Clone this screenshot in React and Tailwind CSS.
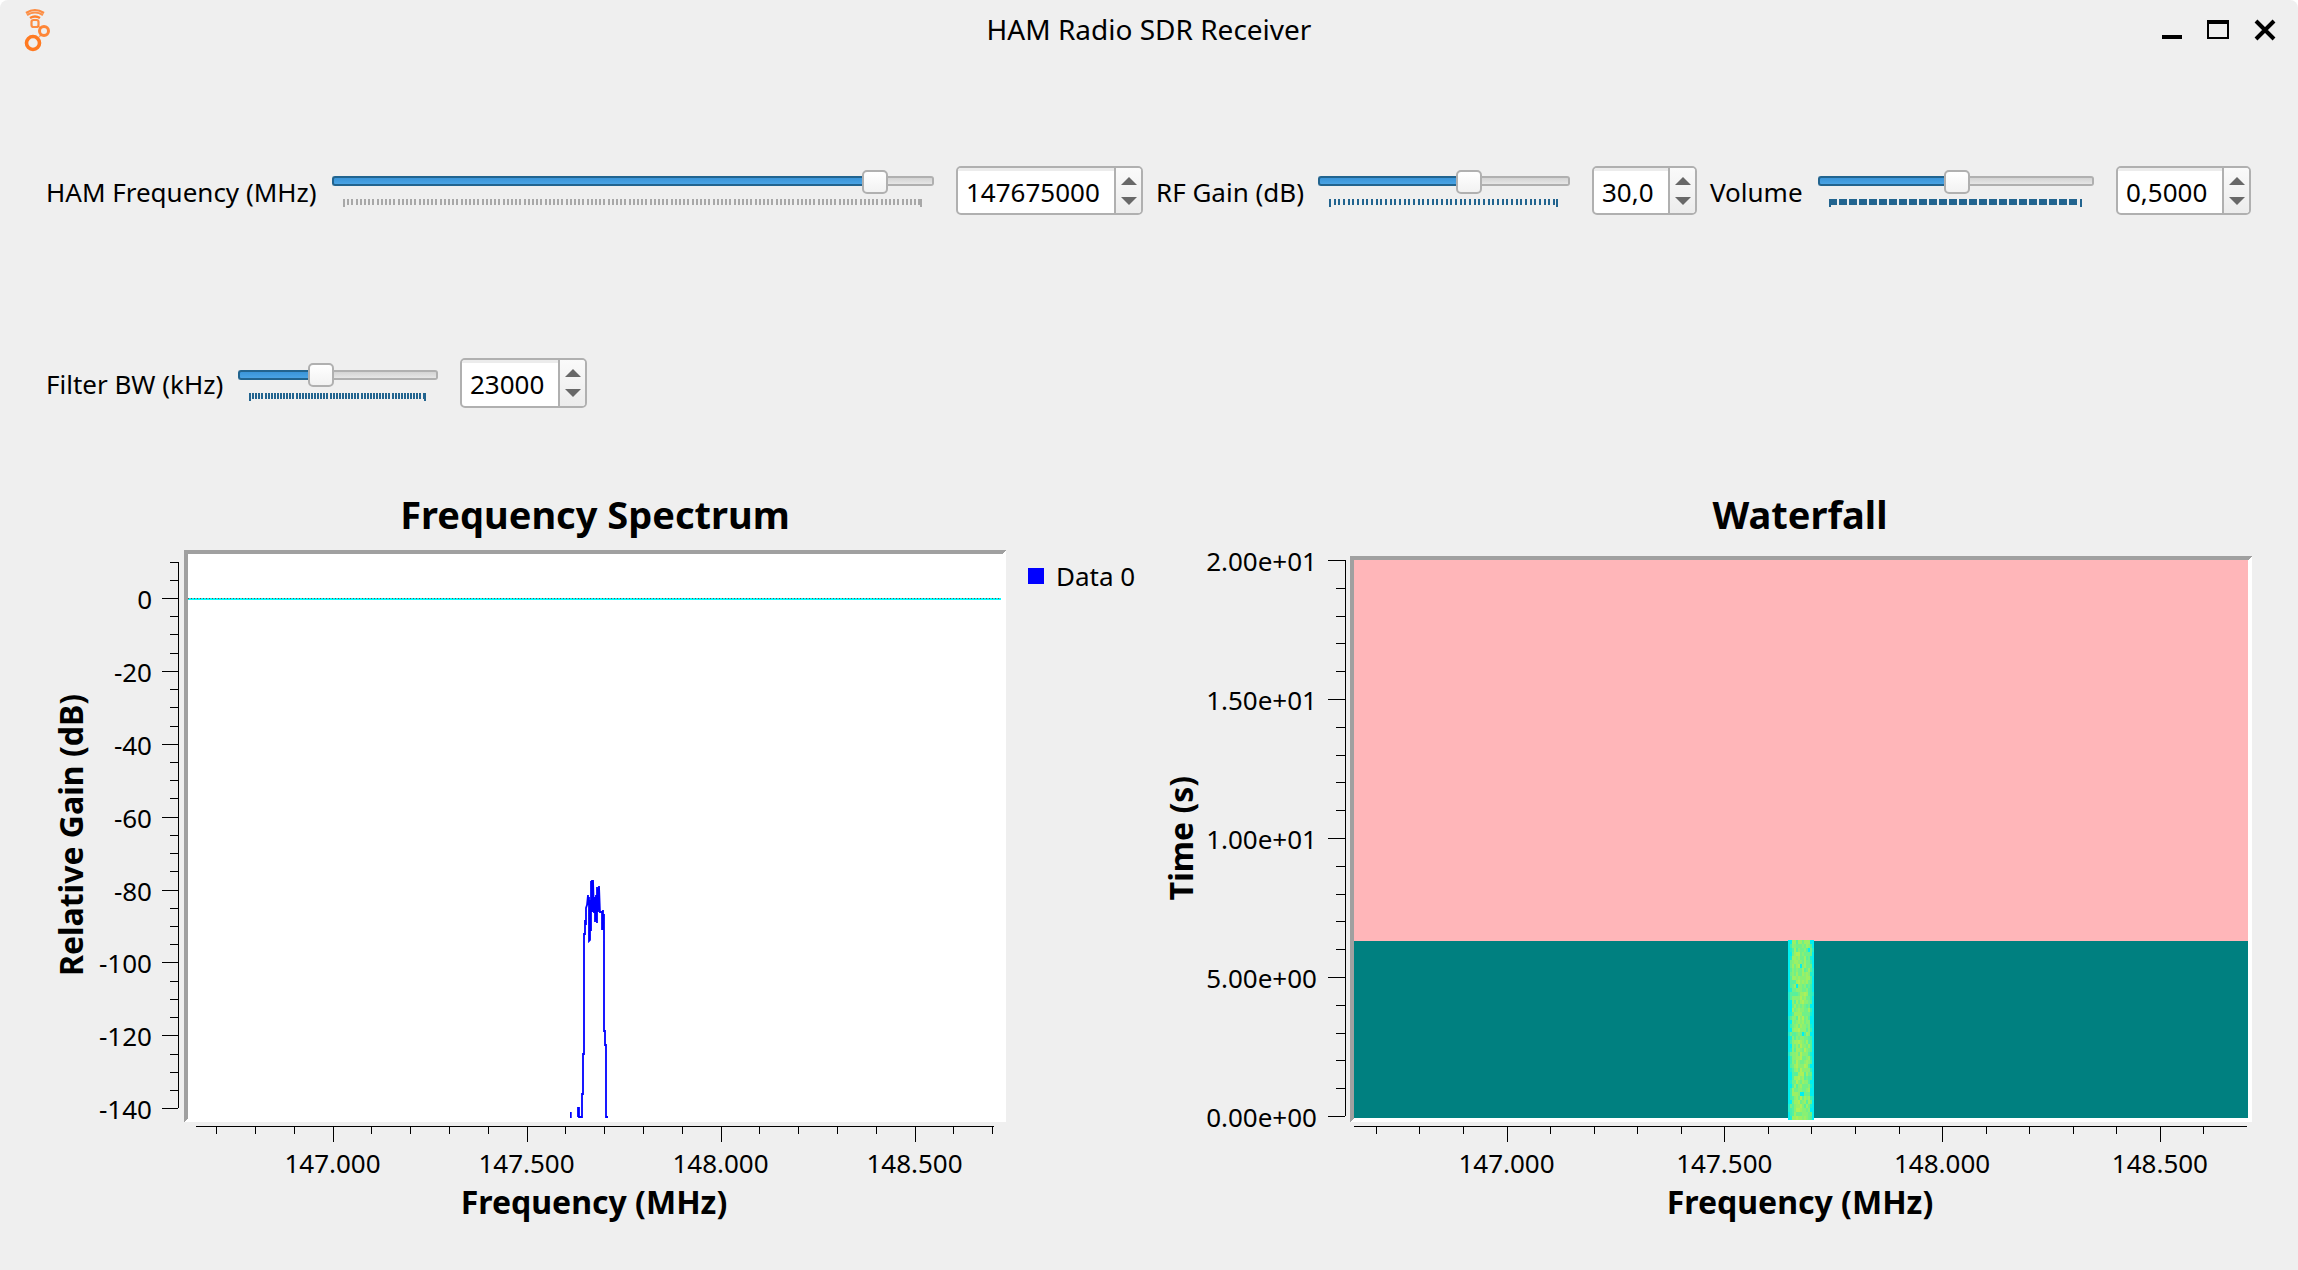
const FONT = "font-['Noto_Sans',sans-serif]";

function Slider({ w, fill, topClass, ticks }) {
  // ticks: { color, step, width }
  const xs = [];
  const last = w - 13;
  for (let x = 11; x <= last - ticks.width; x += ticks.step) xs.push(x);
  return (
    <div className="relative h-full shrink-0" style={{ width: w }}>
      <div className={`${topClass} h-[10px] flex`}>
        <div className="h-full rounded-l-[3px] border-2 border-r-0 border-[#22648f] bg-gradient-to-b from-[#3a94d8] to-[#4aa3e4]" style={{ width: fill + 4 }} />
        <div className="h-full flex-1 rounded-r-[3px] border-2 border-l-0 border-[#b0b0b0] bg-gradient-to-b from-[#d4d4d4] to-[#e6e6e6]" />
      </div>
      <div className="absolute top-[-6px] h-[24px] w-[26px] rounded-[5px] border-2 border-[#b0b0b0] bg-gradient-to-b from-[#ffffff] to-[#f2f2f2]" style={{ left: fill, marginTop: ticks.handleTop }} />
      <svg className="absolute left-0" style={{ top: ticks.top }} width={w} height={8} shapeRendering="crispEdges">
        {xs.map((x) => (
          <rect key={x} x={Math.round(x)} y="0" width={ticks.width} height="6" fill={ticks.color} />
        ))}
        <rect x="11" y="0" width="2" height="8" fill={ticks.color} />
        <rect x={last - 1} y="0" width="2" height="8" fill={ticks.color} />
      </svg>
    </div>
  );
}

function SpinBox({ w, h, value }) {
  return (
    <div className="flex shrink-0 overflow-hidden rounded-[5px] border-2 border-[#b0b0b0] bg-white" style={{ width: w, height: h }}>
      <div className="flex-1 border-t-[3px] border-[#ececec] pl-[8px] leading-[42px]">{value}</div>
      <div className="flex w-[27px] flex-col items-center justify-center gap-[12px] border-l-2 border-[#b0b0b0] bg-gradient-to-b from-[#fafafa] to-[#ececec]">
        <svg width="16" height="8"><polygon points="8,0 16,8 0,8" fill="#686868" /></svg>
        <svg width="16" height="8"><polygon points="0,0 16,0 8,8" fill="#686868" /></svg>
      </div>
    </div>
  );
}

function AppIcon() {
  return (
    <svg width="30" height="46" viewBox="0 0 30 46" fill="none" stroke="#ff7a22">
      <path d="M2 5 Q11 -1 20 5" strokeWidth="2.2" opacity="0.85" />
      <path d="M3 7 Q11 2 19 7" strokeWidth="2.2" opacity="0.8" />
      <path d="M6 10 Q11 7 16 10" strokeWidth="2.5" opacity="0.95" />
      <rect x="7.5" y="12" width="7" height="7" rx="2" strokeWidth="2.2" opacity="0.85" />
      <circle cx="20" cy="23" r="4.5" strokeWidth="3" opacity="0.9" />
      <path d="M14 18 L17 20 M15 29 L17 27" strokeWidth="1.5" opacity="0.6" />
      <circle cx="9" cy="35" r="6.5" strokeWidth="3.6" />
    </svg>
  );
}

function WindowButtons() {
  return (
    <div className="flex items-center justify-end pr-[22px]">
      <svg width="21" height="22" className="mr-[24px]" shapeRendering="crispEdges"><rect x="0" y="16" width="20" height="4" fill="#000" /></svg>
      <svg width="23" height="20" className="mr-[24px]" shapeRendering="crispEdges">
        <rect x="1" y="2" width="20" height="16" fill="none" stroke="#000" strokeWidth="2" />
        <rect x="0" y="0" width="22" height="4" fill="#000" />
      </svg>
      <svg width="22" height="22"><path d="M2 2 L20 20 M20 2 L2 20" stroke="#000" strokeWidth="4" /></svg>
    </div>
  );
}

function range(start, end, step) {
  const out = [];
  for (let v = start; step > 0 ? v <= end + 0.01 : v >= end - 0.01; v += step) out.push(v);
  return out;
}

function XAxis({ x0, x1, major, step, labels }) {
  // major = pixel of 147.000, step = pixels per 100 kHz
  const ticks = range(-4, 20, 1).map((k) => ({ k, x: major + k * step })).filter((t) => t.x > x0 && t.x < x1);
  return (
    <g>
      <line x1={x0} x2={x1} y1="1126.5" y2="1126.5" stroke="#000" shapeRendering="crispEdges" />
      {ticks.map((t) => {
        const isMajor = (t.k + 100) % 5 === 0;
        const px = Math.round(t.x) + 0.5;
        return <line key={t.k} x1={px} x2={px} y1="1126" y2={isMajor ? 1142 : 1134} stroke="#000" shapeRendering="crispEdges" />;
      })}
      {labels.map((l, i) => (
        <text key={l} x={major + i * 5 * step} y="1173" textAnchor="middle" fontSize="26">{l}</text>
      ))}
    </g>
  );
}

function Frame({ x, y, w, h, fill }) {
  return (
    <g shapeRendering="crispEdges">
      <rect x={x} y={y} width={w} height={h} fill={fill} />
      <polygon points={`${x},${y} ${x + w},${y} ${x + w - 4},${y + 4} ${x + 4},${y + 4} ${x + 4},${y + h - 4} ${x},${y + h}`} fill="#a0a0a0" />
      <polygon points={`${x + w},${y} ${x + w},${y + h} ${x},${y + h} ${x + 4},${y + h - 4} ${x + w - 4},${y + h - 4} ${x + w - 4},${y + 4}`} fill="#ffffff" />
    </g>
  );
}

const TRACE = [
  [578, 1117], [578, 1108], [579, 1108], [579, 1117], [582, 1117], [582, 1094], [583, 1094], [583, 1054], [584, 1054],
  [584, 934], [585, 934], [585, 920], [586, 925], [586, 908], [587, 905], [588, 895], [588, 905], [589, 897], [589, 941],
  [590, 940], [590, 900], [591, 931], [591, 881], [592, 912], [592, 880], [593, 912], [593, 880], [594, 913], [595, 897],
  [595, 922], [596, 895], [597, 923], [597, 887], [598, 912], [599, 886], [600, 913], [600, 912], [602, 912], [602, 930],
  [603, 910], [603, 930], [604, 914], [604, 1031], [605, 1031], [605, 1045], [606, 1045], [606, 1117], [608, 1117],
];

function Spectrum() {
  const yTicks = range(10, -140, -5);
  const yOf = (db) => 598 - (db / 5) * 18.22;
  return (
    <svg width="1190" height="732" viewBox="0 538 1190 732" className="block">
      <Frame x={184} y={550} w={822} h={572} fill="#ffffff" />
      <line x1="188" x2="1001" y1="598.5" y2="598.5" stroke="#00ffff" strokeWidth="2" shapeRendering="crispEdges" />
      <line x1="188" x2="1001" y1="598.5" y2="598.5" stroke="#7a4040" strokeWidth="1" strokeDasharray="1 2" shapeRendering="crispEdges" />
      <rect x="570" y="1112" width="1.7" height="6" fill="#0000ff" />
      <polyline points={TRACE.map((p) => p.join(',')).join(' ')} fill="none" stroke="#0000ff" strokeWidth="1.8" />

      <line x1="178.5" x2="178.5" y1={yOf(10)} y2={yOf(-140)} stroke="#000" shapeRendering="crispEdges" />
      {yTicks.map((db) => {
        const isMajor = db % 20 === 0;
        const py = Math.round(yOf(db)) + 0.5;
        return <line key={db} x1={isMajor ? 162 : 170} x2="178" y1={py} y2={py} stroke="#000" shapeRendering="crispEdges" />;
      })}
      {range(0, -140, -20).map((db) => (
        <text key={db} x="152" y={yOf(db) + 11} textAnchor="end" fontSize="26">{db}</text>
      ))}
      <text transform="translate(83 835) rotate(-90)" textAnchor="middle" fontSize="32" fontWeight="700">Relative Gain (dB)</text>

      <XAxis x0={196} x1={994} major={332.5} step={38.8} labels={['147.000', '147.500', '148.000', '148.500']} />
      <text x="594" y="1214" textAnchor="middle" fontSize="32" fontWeight="700">Frequency (MHz)</text>

      <rect x="1028" y="568" width="16" height="16" fill="#0000ff" />
      <text x="1056" y="586" fontSize="26">Data 0</text>
    </svg>
  );
}

// small seeded generator so the waterfall looks the same on every load
function rng(seed) {
  let s = seed;
  return () => {
    s = (s * 1664525 + 1013904223) >>> 0;
    return ((s ^ (s >>> 15)) >>> 0) / 4294967296;
  };
}

const BAND_COLORS = ['#00f0f0', '#20f0d0', '#40f0b0', '#58f09c', '#70f088', '#88f074', '#9cf064', '#aef058'];

function WaterfallCells() {
  const r = rng(147675);
  const cells = [];
  for (let row = 0; row < 45; row++) {
    for (let col = 0; col < 13; col++) {
      let idx;
      if (col === 0 || col === 12) idx = r() < 0.8 ? 0 : 1;
      else if (col === 1 || col === 11) idx = Math.floor(r() * 5);
      else idx = Math.round(5.5 - Math.abs(col - 6) * 0.25 + (r() - 0.5) * 3.5);
      if (r() < 0.012) idx = 0;
      idx = Math.max(0, Math.min(BAND_COLORS.length - 1, idx));
      cells.push(<rect key={`${row}-${col}`} x={1788 + col * 2} y={940 + row * 4} width="2" height="4" fill={BAND_COLORS[idx]} />);
    }
  }
  return <g shapeRendering="crispEdges">{cells}</g>;
}

function Waterfall() {
  const yOf = (s) => 1116 - s * 27.8;
  return (
    <svg width="996" height="732" viewBox="1302 538 996 732" className="block" overflow="visible">
      <Frame x={1350} y={556} w={902} h={566} fill="#ffb6b9" />
      <rect x="1354" y="941" width="894" height="177" fill="#008080" shapeRendering="crispEdges" />
      <WaterfallCells />

      <line x1="1345.5" x2="1345.5" y1="560" y2="1116" stroke="#000" shapeRendering="crispEdges" />
      {range(0, 20, 1).map((s) => {
        const py = Math.round(yOf(s)) + 0.5;
        return <line key={s} x1={s % 5 === 0 ? 1328 : 1336} x2="1345" y1={py} y2={py} stroke="#000" shapeRendering="crispEdges" />;
      })}
      {['0.00e+00', '5.00e+00', '1.00e+01', '1.50e+01', '2.00e+01'].map((l, i) => (
        <text key={l} x="1317" y={yOf(i * 5) + 11} textAnchor="end" fontSize="26">{l}</text>
      ))}
      <text transform="translate(1193 838) rotate(-90)" textAnchor="middle" fontSize="32" fontWeight="700">Time (s)</text>

      <XAxis x0={1354} x1={2247} major={1506.5} step={43.56} labels={['147.000', '147.500', '148.000', '148.500']} />
      <text x="1800" y="1214" textAnchor="middle" fontSize="32" fontWeight="700">Frequency (MHz)</text>
    </svg>
  );
}

export default function App() {
  return (
    <div className={`${FONT} h-[1270px] w-[2298px] overflow-hidden rounded-t-[8px] bg-[#efefef] text-[26px] leading-none text-black`}>
      <div className="grid h-[60px] grid-cols-[1fr_auto_1fr] items-center">
        <div className="pl-[24px] pt-[2px]"><AppIcon /></div>
        <div className="pb-[3px] text-[28px]">HAM Radio SDR Receiver</div>
        <WindowButtons />
      </div>

      <div className="mt-[106px] flex h-[49px] items-center pl-[46px]">
        <div className="w-[286px] shrink-0 pt-[2px]">HAM Frequency (MHz)</div>
        <Slider w={602} fill={530} topClass="mt-[10px]" ticks={{ color: '#a8a8a8', step: 4.2, width: 2, top: 33, handleTop: 10 }} />
        <div className="ml-[22px]"><SpinBox w={187} h={49} value="147675000" /></div>
        <div className="ml-[13px] w-[162px] shrink-0 pt-[2px]">RF Gain (dB)</div>
        <Slider w={252} fill={138} topClass="mt-[10px]" ticks={{ color: '#22648f', step: 4.67, width: 2, top: 33, handleTop: 10 }} />
        <div className="ml-[22px]"><SpinBox w={105} h={49} value="30,0" /></div>
        <div className="ml-[13px] w-[108px] shrink-0 pt-[2px]">Volume</div>
        <Slider w={276} fill={126} topClass="mt-[10px]" ticks={{ color: '#22648f', step: 10, width: 8, top: 33, handleTop: 10 }} />
        <div className="ml-[22px]"><SpinBox w={135} h={49} value="0,5000" /></div>
      </div>

      <div className="mt-[143px] flex h-[50px] items-center pl-[46px]">
        <div className="w-[192px] shrink-0 pt-[2px]">Filter BW (kHz)</div>
        <Slider w={200} fill={70} topClass="mt-[12px]" ticks={{ color: '#22648f', step: 3.1, width: 1.5, top: 35, handleTop: 11 }} />
        <div className="ml-[22px]"><SpinBox w={127} h={50} value="23000" /></div>
      </div>

      <div className="mt-[82px] flex">
        <div className="w-[1190px] shrink-0">
          <div className="h-[48px] text-center text-[38px] font-bold leading-[48px]">Frequency Spectrum</div>
          <Spectrum />
        </div>
        <div className="ml-[112px] w-[996px] shrink-0">
          <div className="h-[48px] text-center text-[38px] font-bold leading-[48px]">Waterfall</div>
          <Waterfall />
        </div>
      </div>
    </div>
  );
}
